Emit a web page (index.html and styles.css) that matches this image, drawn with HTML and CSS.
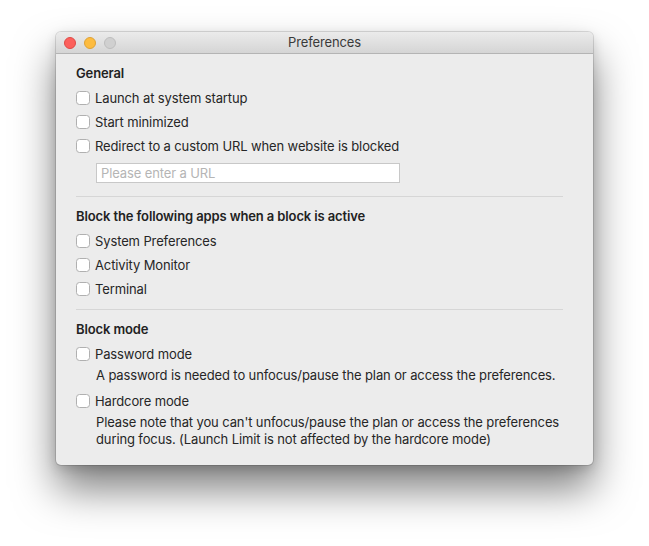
FILE: index.html
```html
<!DOCTYPE html>
<html>
<head>
<meta charset="utf-8">
<link rel="stylesheet" href="styles.css">
</head>
<body>
<div class="stage">
  <div class="window">
    <div class="titlebar">
      <div class="lights">
        <span class="light red"></span>
        <span class="light yellow"></span>
        <span class="light grey"></span>
      </div>
      <div class="title">Preferences</div>
    </div>
    <div class="content">
      <div class="heading">General</div>
      <label class="row"><span class="box"></span>Launch at system startup</label>
      <label class="row"><span class="box"></span>Start minimized</label>
      <label class="row"><span class="box"></span>Redirect to a custom URL when website is blocked</label>
      <div class="url">Please enter a URL</div>
      <div class="sep sep1"></div>
      <div class="heading">Block the following apps when a block is active</div>
      <label class="row"><span class="box"></span>System Preferences</label>
      <label class="row"><span class="box"></span>Activity Monitor</label>
      <label class="row"><span class="box"></span>Terminal</label>
      <div class="sep sep2"></div>
      <div class="heading">Block mode</div>
      <label class="row"><span class="box"></span>Password mode</label>
      <div class="desc">A password is needed to unfocus/pause the plan or access the preferences.</div>
      <label class="row"><span class="box"></span>Hardcore mode</label>
      <div class="desc">Please note that you can't unfocus/pause the plan or access the preferences<br>during focus. (Launch Limit is not affected by the hardcore mode)</div>
    </div>
  </div>
</div>
</body>
</html>
```
FILE: styles.css
```css
html, body {
  margin: 0;
  padding: 0;
  background: #ffffff;
}
body {
  font-family: Inter, "Noto Sans", "Liberation Sans", sans-serif;
  font-size: 13px;
  letter-spacing: -0.12px;
  color: #262626;
}
.stage {
  height: 546px;
  box-sizing: border-box;
  padding: 32px 0 0 56px;
}
.window {
  width: 537px;
  height: 433px;
  box-sizing: border-box;
  background: #ececec;
  border-radius: 5px;
  overflow: hidden;
  box-shadow: 0 0 0 1px rgba(0,0,0,0.12), 0 24px 42px rgba(0,0,0,0.5), 0 4px 12px rgba(0,0,0,0.15);
}
.titlebar {
  height: 21px;
  position: relative;
  background: linear-gradient(#ebebeb, #d5d5d5);
  border-bottom: 1px solid #b4b4b4;
  display: flex;
  align-items: center;
  justify-content: center;
}
.lights {
  position: absolute;
  left: 8px;
  top: 5px;
  display: flex;
  gap: 8px;
}
.light {
  width: 12px;
  height: 12px;
  border-radius: 50%;
  box-sizing: border-box;
}
.red { background: #fc605c; border: 1px solid #de4a46; }
.yellow { background: #fdbc40; border: 1px solid #dea236; }
.grey { background: #d0d0d0; border: 1px solid #bdbdbd; }
.title {
  font-size: 13px;
  color: #3a3a3a;
  line-height: 21px;
}
.content {
  padding: 11px 8px 0 20px;
}
.heading {
  font-weight: 600;
  line-height: 16px;
  margin-bottom: 5px;
  color: #222;
}
.row {
  display: flex;
  align-items: center;
  height: 24px;
}
.box {
  width: 14px;
  height: 14px;
  box-sizing: border-box;
  background: #fff;
  border: 1px solid #b0b0b0;
  border-radius: 3.5px;
  margin: 0 5px 0 0;
}
.url {
  margin: 5px 0 0 20px;
  width: 304px;
  height: 20px;
  box-sizing: border-box;
  background: #fff;
  border: 1px solid #c8c8c8;
  color: #b5b5b5;
  line-height: 18px;
  padding-left: 4px;
}
.sep {
  height: 1px;
  background: #d6d6d6;
  width: 487px;
}
.sep1 { margin: 13px 0 11px; }
.sep2 { margin: 8px 0 11px; }
.desc {
  line-height: 17px;
  padding: 1px 0 5px 20px;
  white-space: nowrap;
}
```
